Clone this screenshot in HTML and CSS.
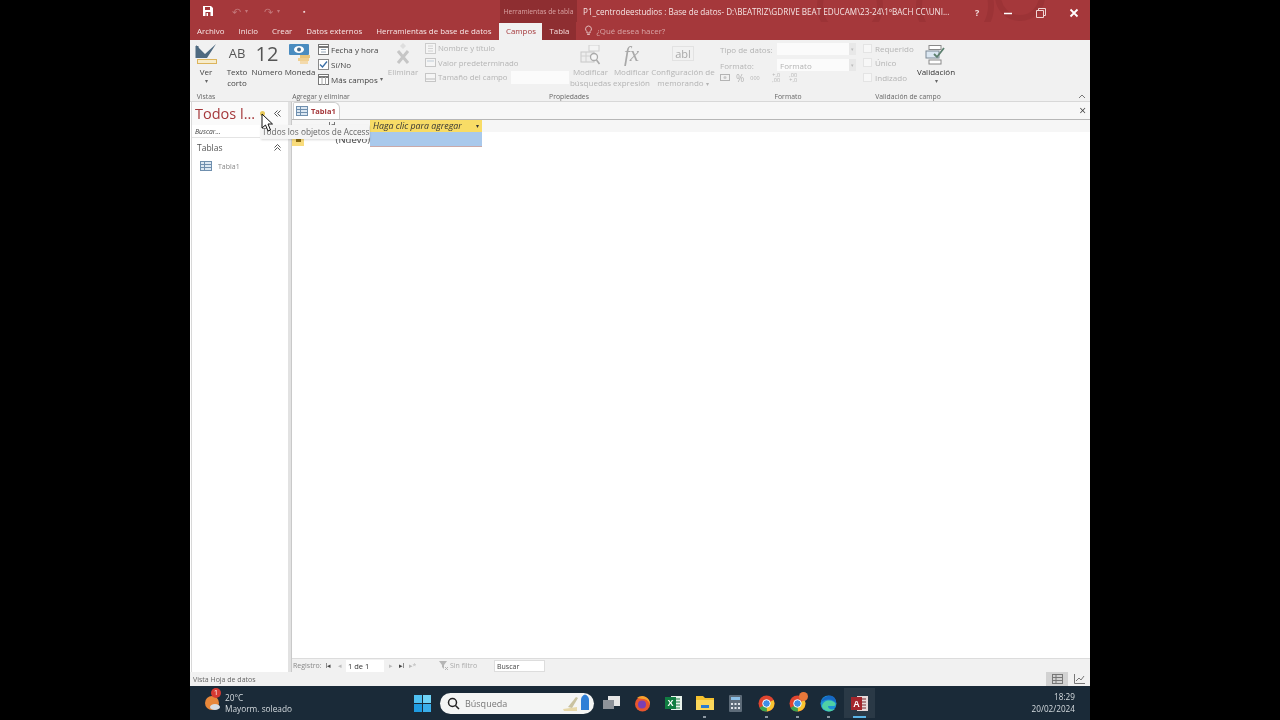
FILE: index.html
```html
<!DOCTYPE html>
<html lang="es">
<head>
<meta charset="utf-8">
<title>Access</title>
<link rel="stylesheet" href="styles.css">
</head>
<body>
<div class="app">
  <header class="titlebar">
    <svg class="art" width="300" height="40" viewBox="0 0 300 40"><g fill="none" stroke="#8f2c30" stroke-width="6" opacity=".4"><circle cx="70" cy="6" r="30"/><circle cx="175" cy="6" r="36"/><circle cx="240" cy="-4" r="22"/></g></svg>
    <div class="qat">
      <svg class="save" width="10" height="10" viewBox="0 0 10 10"><path d="M0 0h8l2 2v8H0z" fill="#fff"/><path d="M2 1h5v3H2zM2.500 6h5v4h-5z" fill="#a4373a"/><path d="M3.500 7h1.500v3H3.500z" fill="#fff"/></svg>
      <span class="qat-dim">↶</span><span class="qat-dot">▾</span>
      <span class="qat-dim">↷</span><span class="qat-dot">▾</span>
      <span class="qat-custom">▪</span>
    </div>
    <div class="context-label">Herramientas de tabla</div>
    <div class="doc-title">P1_centrodeestudios : Base de datos- D:\BEATRIZ\GDRIVE BEAT EDUCAM\23-24\1ºBACH CC\UNI...</div>
    <div class="win-btns">
      <span class="win-help">?</span>
      <svg width="10" height="10" viewBox="0 0 10 10"><path d="M1 5.500h8" stroke="#fff" stroke-width="1.500"/></svg>
      <svg width="10" height="10" viewBox="0 0 10 10"><path d="M.5 2.500h7v7h-7zM2.500 2.500v-2h7v7h-2" fill="none" stroke="#f0d6d6"/></svg>
      <svg width="10" height="10" viewBox="0 0 10 10"><path d="M1.500 1.500l7 7M8.500 1.500l-7 7" stroke="#fff" stroke-width="1.800"/></svg>
    </div>
  </header>

  <nav class="tabs">
    <span class="tab t-archivo">Archivo</span>
    <span class="tab">Inicio</span>
    <span class="tab">Crear</span>
    <span class="tab">Datos externos</span>
    <span class="tab">Herramientas de base de datos</span>
    <div class="context-tabs">
      <span class="tab-active">Campos</span>
      <span class="tab-tabla">Tabla</span>
    </div>
    <span class="tell">
      <svg width="9" height="11" viewBox="0 0 9 11"><path d="M4.500 1a3 3 0 0 0-1.600 5.500V8h3.200V6.500A3 3 0 0 0 4.500 1zM3.200 9.500h2.600" fill="none" stroke="#e8c9c9" stroke-width=".9"/></svg>
      ¿Qué desea hacer?
    </span>
  </nav>

  <section class="ribbon">
    <div class="group g-vistas">
      <div class="group-body">
        <div class="big big-ver">
          <svg width="24" height="21" viewBox="0 0 24 21"><path d="M2 1l9 9L22 0l-9 14H3z" fill="#4f6a80"/><path d="M3 2v12" stroke="#4f6a80" stroke-width="3"/><rect x="3.500" y="15.500" width="19" height="4" fill="#f7eccb" stroke="#dcb45c"/></svg>
          <span>Ver</span><span class="caret">▾</span>
        </div>
      </div>
      <div class="group-label">Vistas</div>
    </div>

    <div class="group g-agregar">
      <div class="group-body">
        <div class="big big-ab"><span class="glyph-ab">AB</span><span>Texto<br>corto</span></div>
        <div class="big big-num"><span class="glyph-12">12</span><span>Número</span></div>
        <div class="big big-mon">
          <svg width="22" height="22" viewBox="0 0 22 22"><rect x="0" y="0" width="20" height="11" rx="1" fill="#4a8cc0"/><ellipse cx="10" cy="5.500" rx="5" ry="3.500" fill="#fff"/><circle cx="10" cy="5.500" r="2" fill="#4a6f90"/><rect x="11" y="11" width="10" height="3" fill="#e8c47c"/><rect x="9" y="14" width="11" height="3" fill="#f0cf90"/><rect x="11" y="17" width="8" height="3" fill="#f3d9aa"/></svg>
          <span>Moneda</span>
        </div>
        <div class="stack s-fecha">
          <div class="row"><svg width="11" height="11" viewBox="0 0 11 11"><rect x=".5" y=".5" width="10" height="10" fill="#fff" stroke="#777"/><path d="M.5 3h10" stroke="#777" stroke-width="2"/><path d="M3 5.500h5M3 8h5" stroke="#9ab"/></svg><span>Fecha y hora</span></div>
          <div class="row"><svg width="11" height="11" viewBox="0 0 11 11"><rect x=".5" y=".5" width="10" height="10" fill="#fff" stroke="#8a8a8a"/><path d="M2 5.500l2.500 2.500L9 2.500" fill="none" stroke="#3a6ea5" stroke-width="1.300"/></svg><span>Sí/No</span></div>
          <div class="row"><svg width="11" height="11" viewBox="0 0 11 11"><rect x=".5" y=".5" width="10" height="10" fill="#fff" stroke="#777"/><path d="M.5 3h10" stroke="#777" stroke-width="2"/><path d="M4 3v8M7.500 3v8" stroke="#aaa"/></svg><span>Más campos</span><span class="caret">▾</span></div>
        </div>
        <div class="big big-del off">
          <svg width="20" height="23" viewBox="0 0 20 23"><path d="M10 0l-3 3 3 3 3-3z" fill="#dedede"/><path d="M5 8l10 12M15 8L5 20" stroke="#c6c6c6" stroke-width="3"/></svg>
          <span>Eliminar</span>
        </div>
      </div>
      <div class="group-label">Agregar y eliminar</div>
    </div>

    <div class="group g-prop">
      <div class="group-body">
        <div class="stack s-nombre off">
          <div class="row"><svg width="11" height="11" viewBox="0 0 11 11"><rect x=".5" y=".5" width="10" height="10" fill="#f5f5f5" stroke="#ccc"/><path d="M3 3h5M3 5.500h5M3 8h5" stroke="#d2d2d2"/></svg><span>Nombre y título</span></div>
          <div class="row"><svg width="11" height="11" viewBox="0 0 11 11"><rect x=".5" y="1.500" width="10" height="8" fill="#f5f5f5" stroke="#c6c6c6"/><path d="M2 4h7" stroke="#bfcbd6"/></svg><span>Valor predeterminado</span></div>
          <div class="row"><svg width="11" height="11" viewBox="0 0 11 11"><rect x=".5" y="1.500" width="10" height="8" fill="#f5f5f5" stroke="#c6c6c6"/><path d="M1 7h9" stroke="#bbb"/></svg><span>Tamaño del campo</span><span class="mini-input"></span></div>
        </div>
        <div class="big big-busq off">
          <svg width="22" height="20" viewBox="0 0 22 20"><rect x="9" y="0" width="10" height="6" fill="#f4f4f4" stroke="#d0d0d0"/><rect x="1" y="7" width="13" height="10" fill="#eee" stroke="#c8c8c8"/><path d="M1 11h13M6 7v10" stroke="#d0d0d0"/><circle cx="14" cy="12" r="3.500" fill="#f6f6f6" stroke="#aaa" stroke-width="1.300"/><path d="M16.500 15l3 4" stroke="#aaa" stroke-width="1.600"/></svg>
          <span>Modificar<br>búsquedas</span>
        </div>
        <div class="big big-fx off">
          <span class="glyph-fx">fx</span>
          <span>Modificar<br>expresión</span>
        </div>
        <div class="big big-conf off">
          <span class="glyph-abl">abl</span>
          <span class="conf-text">Configuración de<br>memorando <i class="caret">▾</i></span>
        </div>
      </div>
      <div class="group-label">Propiedades</div>
    </div>

    <div class="group g-formato">
      <div class="group-body">
        <div class="form-col off">
          <div class="form-row"><span class="form-lbl">Tipo de datos:</span><span class="form-box"></span><span class="form-arrow">▾</span></div>
          <div class="form-row"><span class="form-lbl">Formato:</span><span class="form-box">Formato</span><span class="form-arrow">▾</span></div>
          <div class="form-tools">
            <svg width="12" height="8" viewBox="0 0 12 8"><rect x=".5" y=".5" width="9" height="6" fill="none" stroke="#b4b4b4"/><circle cx="5" cy="3.500" r="1.500" fill="#c8c8c8"/></svg>
            <span class="pct">%</span><span class="tiny">000</span>
            <span class="tiny two first">+,0 ,00</span><span class="tiny two">,00 +,0</span>
          </div>
        </div>
      </div>
      <div class="group-label">Formato</div>
    </div>

    <div class="group g-valid">
      <div class="group-body">
        <div class="stack s-checks off">
          <div class="row"><span class="chk"></span><span>Requerido</span></div>
          <div class="row"><span class="chk"></span><span>Único</span></div>
          <div class="row"><span class="chk"></span><span>Indizado</span></div>
        </div>
        <div class="big big-val">
          <svg width="22" height="20" viewBox="0 0 22 20"><rect x="4" y=".5" width="12" height="4" fill="#fff" stroke="#8a8a8a"/><rect x="1" y="6" width="13" height="7" fill="#dbe7f2" stroke="#7d8a96"/><rect x="4" y="15" width="12" height="4" fill="#fff" stroke="#8a8a8a"/><path d="M9 9l3 3 7-9" fill="none" stroke="#5c7f6e" stroke-width="1.800"/></svg>
          <span>Validación</span><span class="caret">▾</span>
        </div>
      </div>
      <div class="group-label">Validación de campo</div>
    </div>
    <svg class="collapse" width="8" height="5" viewBox="0 0 8 5"><path d="M1 4l3-3 3 3" fill="none" stroke="#777"/></svg>
  </section>

  <main class="workspace">
    <aside class="navpane">
      <div class="nav-head">
        <span class="nav-title">Todos l...</span>
        <span class="nav-dot"></span>
        <svg class="nav-chev" width="7" height="7" viewBox="0 0 7 7"><path d="M3.500 .5l-3 3 3 3M6.500 .5l-3 3 3 3" fill="none" stroke="#555"/></svg>
      </div>
      <div class="nav-search">Buscar...</div>
      <div class="nav-section"><span>Tablas</span><svg width="7" height="7" viewBox="0 0 7 7"><path d="M.5 3.500l3-3 3 3M.5 6.500l3-3 3 3" fill="none" stroke="#555"/></svg></div>
      <div class="nav-item">
        <svg width="12" height="10" viewBox="0 0 12 10"><rect x=".5" y=".5" width="11" height="9" fill="#dbe7f2" stroke="#6f8fae"/><path d="M.5 3.500h11M.5 6.500h11M4.500 .5v9" stroke="#6f8fae"/></svg>
        <span>Tabla1</span>
      </div>
    </aside>
    <div class="splitter"></div>
    <section class="content">
      <div class="doc-tabs">
        <div class="doc-tab">
          <svg width="12" height="10" viewBox="0 0 12 10"><rect x=".5" y=".5" width="11" height="9" fill="#dbe7f2" stroke="#6f8fae"/><path d="M.5 3.500h11M.5 6.500h11M4.500 .5v9" stroke="#6f8fae"/></svg>
          <span>Tabla1</span>
        </div>
        <span class="doc-close">×</span>
      </div>
      <div class="sheet">
        <div class="sheet-head">
          <span class="corner"></span>
          <span class="col-id">Id</span>
          <span class="col-add">Haga clic para agregar<i>▾</i></span>
        </div>
        <div class="sheet-row">
          <span class="selector"><i></i></span>
          <span class="cell-id">(Nuevo)</span>
          <span class="cell-add"></span>
        </div>
      </div>
      <footer class="recnav">
        <span class="rn-label">Registro:</span>
        <span class="rn-btn">I◂</span><span class="rn-btn dim">◂</span>
        <span class="rn-input">1 de 1</span>
        <span class="rn-btn dim">▸</span><span class="rn-btn">▸I</span><span class="rn-btn dim">▸*</span>
        <span class="rn-filter"><svg width="11" height="10" viewBox="0 0 11 10"><path d="M1 0h8L6 4v4L4 6V4z" fill="#b5b5b5"/><path d="M7 6l3 3M10 6L7 9" stroke="#b5b5b5"/></svg>Sin filtro</span>
        <span class="rn-search">Buscar</span>
      </footer>
    </section>
    <div class="tooltip">Todos los objetos de Access</div>
    <svg class="cursor" width="14" height="20" viewBox="0 0 14 20"><path d="M1 1v14l3.500-3 2.500 6 2.500-1-2.500-6h4.500z" fill="#fff" stroke="#111"/></svg>
  </main>

  <div class="statusbar">
    <span>Vista Hoja de datos</span>
    <div class="views">
      <span class="view-btn on"><svg width="11" height="10" viewBox="0 0 11 10"><rect x=".5" y=".5" width="10" height="9" fill="none" stroke="#777"/><path d="M.5 3.500h10M.5 6.500h10M4 .5v9" stroke="#777"/></svg></span>
      <span class="view-btn"><svg width="11" height="10" viewBox="0 0 11 10"><path d="M.5 0v9.500H11" fill="none" stroke="#777"/><path d="M2 7l3-3 2 2 3-4" fill="none" stroke="#777"/></svg></span>
    </div>
  </div>

  <footer class="taskbar">
    <div class="weather">
      <svg class="w-icon" width="18" height="18" viewBox="0 0 18 18"><circle cx="8" cy="9" r="7" fill="#e8873a"/><ellipse cx="11" cy="13" rx="5" ry="3" fill="#d9dde2"/></svg>
      <span class="w-badge">1</span>
      <div class="w-text"><span>20°C</span><span>Mayorm. soleado</span></div>
    </div>
    <div class="tb-center">
      <svg class="win-logo" width="17" height="17" viewBox="0 0 17 17"><rect width="8" height="8" fill="#4fc1f2"/><rect x="9" width="8" height="8" fill="#6fd3f7"/><rect y="9" width="8" height="8" fill="#1f9be0"/><rect x="9" y="9" width="8" height="8" fill="#3aaeea"/></svg>
      <div class="search-pill">
        <svg width="13" height="13" viewBox="0 0 13 13"><circle cx="5.500" cy="5.500" r="4" fill="none" stroke="#222" stroke-width="1.500"/><path d="M8.500 8.500l3.500 3.500" stroke="#222" stroke-width="1.500"/></svg>
        <span>Búsqueda</span>
        <svg class="pill-art" width="30" height="20" viewBox="0 0 30 20"><path d="M1 16l14-2v4H2z" fill="#e7d8a8"/><path d="M6 14l8-10 2 1-6 10z" fill="#c9c2a0"/><path d="M19 17V7a4 5 0 0 1 8 0v10z" fill="#2f7fd6"/><circle cx="23" cy="3" r="1.500" fill="#2f7fd6"/></svg>
      </div>
      <div class="tb-icons">
        <span class="tb-icon"><svg width="17" height="14" viewBox="0 0 17 14"><rect x="5" y="0" width="12" height="10" fill="#e6e6e6"/><rect x="0" y="4" width="11" height="9" fill="#8d9299"/></svg></span>
        <span class="tb-icon"><svg width="17" height="17" viewBox="0 0 17 17"><circle cx="8.500" cy="9" r="7.500" fill="#e8562e"/><circle cx="8" cy="9.500" r="4" fill="#7a3fb5"/><path d="M3 3c3-3 9-3 12 2 1 2 1 4 1 5-1-4-4-6-7-6z" fill="#f7a02c"/></svg></span>
        <span class="tb-icon"><svg width="17" height="16" viewBox="0 0 17 16"><rect x="6" y="1" width="11" height="14" fill="#e9f3ec"/><path d="M9 4h6M9 7h6M9 10h6M9 13h6" stroke="#1e7b45"/><rect y="2" width="11" height="12" fill="#107c41"/><text class="xl" x="5.500" y="11">X</text></svg></span>
        <span class="tb-icon tb-run"><svg width="18" height="16" viewBox="0 0 18 16"><path d="M0 1h7l2 2h9v12H0z" fill="#f5c12e"/><rect y="5" width="18" height="10" fill="#fbd75b"/><rect x="5" y="10" width="8" height="3" fill="#2d7dd2"/></svg></span>
        <span class="tb-icon"><svg width="13" height="17" viewBox="0 0 13 17"><rect width="13" height="17" rx="1" fill="#5d6b78"/><rect x="2" y="2" width="9" height="3" fill="#8cc0e8"/><path d="M2 8h2v2H2zM5.500 8h2v2h-2zM9 8h2v2H9zM2 12h2v2H2zM5.500 12h2v2h-2zM9 12h2v2H9z" fill="#dfe5ea"/></svg></span>
        <span class="tb-icon tb-run"><svg width="17" height="17" viewBox="0 0 17 17"><circle cx="8.500" cy="8.500" r="8" fill="#e0452f"/><path d="M8.500 8.500L1.500 13A8 8 0 0 0 9 16.500z" fill="#3da54f"/><path d="M8.500 8.500L9 16.500A8 8 0 0 0 15.600 5z" fill="#f7c530"/><circle cx="8.500" cy="8.500" r="3.800" fill="#3f8ee8" stroke="#fff"/></svg></span>
        <span class="tb-icon tb-run"><svg width="17" height="17" viewBox="0 0 17 17"><circle cx="8.500" cy="8.500" r="8" fill="#e0452f"/><path d="M8.500 8.500L1.500 13A8 8 0 0 0 9 16.500z" fill="#3da54f"/><path d="M8.500 8.500L9 16.500A8 8 0 0 0 15.600 5z" fill="#f7c530"/><circle cx="8.500" cy="8.500" r="3.800" fill="#3f8ee8" stroke="#fff"/></svg><i class="tb-badge"></i></span>
        <span class="tb-icon tb-run"><svg width="17" height="17" viewBox="0 0 17 17"><circle cx="8.500" cy="8.500" r="8" fill="#1c8fd6"/><path d="M2 11c1-5 7-7 12-4 2 1 2 4 0 4H8c0 3 3 4 7 3-3 3-8 3-10 1-2-1-3-2-3-4z" fill="#4fd1a5"/><path d="M1 7C3 2 8 0 12 1c3 1 4 4 4 7-3-4-9-5-15-1z" fill="#1668c4"/></svg></span>
        <span class="tb-icon tb-active"><svg width="17" height="17" viewBox="0 0 17 17"><rect x="6" y="1" width="11" height="15" fill="#e8dada"/><path d="M9 4h6M9 7h6M9 10h6M9 13h6" stroke="#7a2a30" stroke-width="1.200"/><rect y="2" width="11" height="13" fill="#a4262c"/><text class="xl" x="5.500" y="12">A</text></svg></span>
      </div>
    </div>
    <div class="clock"><span>18:29</span><span>20/02/2024</span></div>
  </footer>
</div>
</body>
</html>
```
FILE: styles.css
```css
* { box-sizing: border-box; }
html, body { margin: 0; height: 720px; background: #000; overflow: hidden; }
body { display: flex; justify-content: center; font-family: "Open Sans", "Liberation Sans", sans-serif; font-size: 8px; color: #444; }
i { font-style: normal; }
.app { width: 900px; height: 720px; display: flex; flex-direction: column; background: #f1f1f1; filter: blur(.35px); }

.titlebar { position: relative; height: 22px; flex: none; background: #a5383b; display: flex; align-items: center; color: #f6e6e6; overflow: hidden; }
.art { position: absolute; left: 590px; top: 0; }
.qat { width: 310px; padding-left: 13px; display: flex; align-items: center; position: relative; }
.save { margin-right: 19px; }
.qat-dim { font-size: 11px; color: #c4777a; width: 11px; }
.qat-dot { font-size: 6px; color: #c4777a; width: 21px; padding-left: 2px; }
.qat-custom { font-size: 7px; color: #f1d8d8; margin-left: 7px; }
.context-label { width: 77px; height: 22px; line-height: 24px; background: #8e2e31; color: #dba5a6; font-size: 6.700px; text-align: center; white-space: nowrap; position: relative; }
.doc-title { margin-left: 6px; width: 370px; font-size: 8.120px; white-space: nowrap; position: relative; color: #f5e5e5; }
.win-btns { position: absolute; left: 785px; top: 6px; width: 104px; display: flex; justify-content: space-between; align-items: center; }
.win-help { font-size: 9px; font-weight: 700; color: #f3dddd; }

.tabs { height: 18px; flex: none; background: #a5383b; color: #f7e7e7; display: flex; align-items: center; padding: 0 0 1px 7px; gap: 14px; font-size: 7.900px; position: relative; }
.tab { white-space: nowrap; }
.context-tabs { display: flex; height: 18px; margin-bottom: -1px; background: #8e2e31; margin-left: -6px; align-items: stretch; width: 77px; }
.tab-active { background: #f1f1f1; color: #a5383b; width: 43px; margin-top: 1px; text-align: center; line-height: 16px; }
.tab-tabla { width: 34px; text-align: center; line-height: 18px; color: #f5dcdc; }
.tell { color: #d9a6a7; display: flex; align-items: center; gap: 3px; margin-left: -6px; }

.ribbon { position: relative; height: 62px; flex: none; background: #f1f1f1; display: flex; border-bottom: 1px solid #d8d8d8; }
.group { display: flex; flex-direction: column; flex: none; }
.g-vistas { width: 32px; }
.g-agregar { width: 198px; }
.g-prop { width: 298px; }
.g-formato { width: 140px; }
.g-valid { width: 100px; }
.group-body { flex: 1; display: flex; align-items: flex-start; min-height: 0; padding-top: 3px; }
.group-label { height: 11px; line-height: 14px; font-size: 6.800px; text-align: center; color: #666; white-space: nowrap; }
.big { display: flex; flex-direction: column; align-items: center; text-align: center; line-height: 11px; flex: none; color: #444; }
.caret { font-size: 6px; line-height: 8px; color: #666; }
.off, .off .caret { color: #b4b4b4; }
.big svg { display: block; }
.big-ver { width: 32px; }
.big-ver svg { margin-top: 1px; margin-bottom: 1px; }
.big-ab { width: 30px; }
.big-num { width: 30px; }
.big-mon { width: 36px; }
.big-mon svg { margin-top: 1px; }
.glyph-ab { font-size: 13px; line-height: 20px; height: 23px; color: #555; }
.glyph-12 { font-size: 20px; line-height: 22px; height: 23px; color: #555; }
.stack { display: flex; flex-direction: column; flex: none; }
.row { display: flex; align-items: center; gap: 2px; height: 12px; white-space: nowrap; }
.s-fecha { width: 66px; gap: 3.200px; }
.big-del { width: 38px; }
.s-nombre { width: 145px; margin-left: 5px; margin-top: -1px; gap: 2.500px; font-size: 7.800px; }
.mini-input { width: 58px; height: 13px; background: #fbfbfb; margin-left: 1px; }
.big-busq { width: 41px; }
.big-busq svg { margin-top: 2px; margin-bottom: 1px; }
.big-fx { width: 41px; }
.big-conf { width: 62px; }
.conf-text { white-space: nowrap; }
.glyph-fx { font-family: "Liberation Serif", serif; font-style: italic; font-size: 21px; line-height: 22px; height: 23px; color: #a8a8a8; }
.glyph-abl { font-size: 11px; line-height: 13px; height: 15px; margin: 3px 0 5px; padding: 0 2px; border: 1px solid #e2e2e2; color: #a8a8a8; }
.form-col { display: flex; flex-direction: column; gap: 2px; padding-left: 2px; margin-top: -1px; }
.form-row { display: flex; align-items: center; height: 14px; white-space: nowrap; }
.form-lbl { width: 57px; }
.form-box { width: 72px; height: 12px; line-height: 13px; background: #fbfbfb; padding-left: 3px; }
.form-arrow { width: 7px; height: 12px; line-height: 12px; font-size: 5px; text-align: center; background: #e8e8e8; color: #bbb; }
.form-tools { display: flex; gap: 4px; height: 12px; align-items: center; margin-top: -2px; }
.pct { font-size: 10px; line-height: 12px; }
.tiny { font-size: 5.500px; line-height: 7px; margin-left: 2px; }
.two { width: 11px; white-space: normal; line-height: 5.500px; text-align: center; }
.first { margin-left: 7px; }
.s-checks { width: 53px; margin-left: 5px; margin-top: -1px; gap: 2.500px; }
.chk { width: 9px; height: 9px; background: #f7f7f7; border: 1px solid #e4e4e4; margin-right: 1px; }
.big-val { width: 40px; color: #333; }
.big-val svg { margin-top: 2px; margin-bottom: 1px; }
.collapse { position: absolute; right: 4px; bottom: 2px; }

.workspace { position: relative; flex: 1; min-height: 0; display: flex; background: #fff; }
.navpane { width: 97px; margin-left: 1px; flex: none; border-left: 1px solid #d8d8d8; background: #fff; color: #555; }
.nav-head { height: 23px; display: flex; align-items: center; padding-left: 3px; background: #fafafa; }
.nav-title { font-size: 14.500px; color: #a5383b; width: 65px; white-space: nowrap; line-height: 23px; }
.nav-dot { width: 5px; height: 5px; border-radius: 50%; background: #e8c95a; }
.nav-chev { margin-left: 9px; }
.nav-search { height: 13px; line-height: 13px; font-style: italic; font-size: 6.800px; padding-left: 3px; color: #444; border-bottom: 1px solid #e4e4e4; }
.nav-section { height: 19px; display: flex; justify-content: space-between; align-items: center; padding: 0 7px 0 5px; font-size: 8.500px; }
.nav-item { display: flex; align-items: center; gap: 6px; padding: 4px 0 0 8px; font-size: 7px; color: #888; }
.splitter { width: 3px; flex: none; background: #e2e2e2; }
.content { flex: 1; min-width: 0; display: flex; flex-direction: column; border-left: 1px solid #c9c9c9; }
.doc-tabs { height: 18px; flex: none; display: flex; justify-content: space-between; align-items: flex-end; border-bottom: 1px solid #b7b7b7; background: #f7f7f7; padding-left: 1px; }
.doc-tab { height: 17px; width: 47px; display: flex; align-items: center; gap: 3px; padding-left: 2px; background: #fff; border: 1px solid #cfcfcf; border-bottom: 0; border-radius: 2px 6px 0 0; color: #a5383b; font-weight: 700; font-size: 7.500px; }
.doc-close { font-size: 12px; line-height: 17px; padding-right: 4px; color: #444; }
.sheet { flex: 1; background: #fff; }
.sheet-head { height: 12px; display: flex; background: #f6f6f6; }
.corner { width: 12px; }
.col-id { width: 66px; text-align: center; font-size: 8.500px; line-height: 12px; padding-right: 10px; }
.col-add { width: 112px; background: #f8dc66; font-style: italic; color: #333; font-size: 8.800px; line-height: 12px; padding: 0 3px; display: flex; justify-content: space-between; white-space: nowrap; }
.col-add i { font-size: 6px; font-style: normal; }
.sheet-row { height: 14px; display: flex; }
.selector { width: 12px; background: #f9dc7c; display: flex; align-items: center; justify-content: center; }
.selector i { width: 5px; height: 4px; background: #8a6a10; margin-top: 2px; }
.cell-id { width: 66px; text-align: right; font-size: 9.500px; line-height: 15px; }
.cell-add { width: 112px; background: #a9c9ec; box-shadow: 0 1px 0 #c9a9a9; }
.recnav { height: 14px; flex: none; display: flex; align-items: center; background: #f1f1f1; border-top: 1px solid #dcdcdc; color: #888; font-size: 7px; padding-left: 1px; }
.rn-label { width: 30px; }
.rn-btn { width: 11px; text-align: center; font-size: 7px; color: #444; }
.rn-btn.dim { color: #bbb; }
.rn-input { width: 38px; height: 12px; line-height: 12px; background: #fff; color: #333; padding-left: 2px; margin: 0 1px; font-size: 7.500px; }
.rn-filter { display: flex; align-items: center; gap: 1px; margin-left: 20px; width: 56px; color: #aaa; }
.rn-search { width: 51px; height: 12px; line-height: 11px; background: #fff; color: #444; padding-left: 2px; border: 1px solid #ddd; }
.tooltip { position: absolute; left: 70px; top: 23px; width: 109px; height: 14px; background: #f5f5f5; line-height: 14px; padding-left: 2px; font-size: 8.300px; color: #666; white-space: nowrap; box-shadow: 1px 1px 2px rgba(0,0,0,.15); }
.cursor { position: absolute; left: 71px; top: 11px; }

.statusbar { height: 14px; flex: none; background: #f1f1f1; display: flex; justify-content: space-between; align-items: center; padding-left: 3px; color: #666; font-size: 7px; }
.views { display: flex; }
.view-btn { width: 22px; height: 14px; display: flex; align-items: center; justify-content: center; }
.view-btn.on { background: #d2d2d2; }

.taskbar { height: 34px; flex: none; background: #1a2a38; display: flex; align-items: center; position: relative; color: #e4e8ec; }
.weather { position: relative; width: 224px; padding-left: 14px; display: flex; align-items: center; gap: 3px; flex: none; }
.w-icon { flex: none; }
.w-badge { position: absolute; left: 21px; top: -4px; width: 10px; height: 10px; border-radius: 50%; background: #d63a32; color: #fff; font-size: 7px; line-height: 10px; text-align: center; }
.w-text { display: flex; flex-direction: column; line-height: 11px; font-size: 8.300px; color: #d4dade; }
.tb-center { display: flex; align-items: center; }
.win-logo { margin-right: 9px; }
.search-pill { width: 154px; height: 21px; border-radius: 11px; background: #f4f5f4; display: flex; align-items: center; padding: 0 2px 0 7px; color: #777; font-size: 9px; gap: 5px; margin-right: 2px; }
.search-pill span { flex: 1; }
.tb-icons { display: flex; align-items: center; }
.tb-icon { position: relative; width: 31px; height: 30px; display: flex; align-items: center; justify-content: center; flex: none; }
.tb-run::after { content: ""; position: absolute; left: 14px; bottom: 0; width: 3px; height: 2px; background: #8d98a2; }
.tb-active { background: #2a3946; }
.tb-active::after { content: ""; position: absolute; left: 9px; bottom: 0; width: 13px; height: 2px; background: #5bb5e8; }
.tb-badge { position: absolute; left: 17px; top: 4px; width: 9px; height: 9px; border-radius: 50%; background: #e8783a; }
.xl { fill: #fff; font-family: "Liberation Sans", sans-serif; font-size: 9px; font-weight: 700; text-anchor: middle; }
.clock { margin-left: auto; padding-right: 15px; display: flex; flex-direction: column; align-items: flex-end; line-height: 12px; font-size: 8.200px; color: #d4dade; }
```
